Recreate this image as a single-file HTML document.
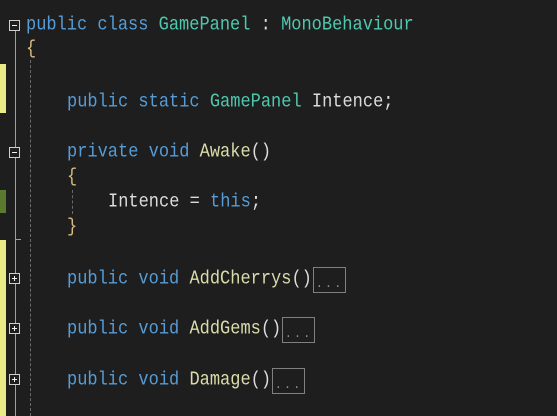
<!DOCTYPE html>
<html><head><style>
html,body{margin:0;padding:0;}
body{width:557px;height:416px;background:#1e1e1e;position:relative;overflow:hidden;font-family:"Liberation Mono",monospace;font-size:17px;}
.l{position:absolute;white-space:pre;line-height:25px;height:25px;color:#dcdcdc;transform:scaleY(1.15);transform-origin:0 50%;}
.k{color:#569cd6}.c{color:#4ec9b0}.m{color:#dcdcaa}.b{color:#d7ba7d}
.bar{position:absolute;left:0;width:6px;}
.fold{position:absolute;left:9px;width:11px;height:11px;border:1px solid #d0d0d0;background:#1e1e1e;box-sizing:border-box;}
.fold:before{content:"";position:absolute;left:2px;top:4px;width:5px;height:1px;background:#f0f0f0;}
.plus:after{content:"";position:absolute;left:4px;top:2px;width:1px;height:5px;background:#f0f0f0;}
.vl{position:absolute;left:15px;width:1px;background:#a0a0a0;}
.dash{position:absolute;width:0;border-left:1px dashed #6a6a6a;}
.box{position:absolute;width:31px;height:24px;border:1px solid #808080;color:#909090;font-size:12px;line-height:32px;text-align:center;letter-spacing:2px;}
</style></head><body>
<div class="bar" style="top:64px;height:49px;background:#eaeb84"></div>
<div class="bar" style="top:190px;height:23px;background:#5b7a2f"></div>
<div class="bar" style="top:240px;height:176px;background:#eaeb84"></div>
<div class="vl" style="top:31px;height:116px"></div>
<div class="vl" style="top:158px;height:82px"></div>
<div style="position:absolute;left:15px;top:239px;width:6px;height:1px;background:#a0a0a0"></div>
<div class="vl" style="top:240px;height:176px"></div>
<div class="fold" style="top:20px"></div>
<div class="fold" style="top:147px"></div>
<div class="fold plus" style="top:273px"></div>
<div class="fold plus" style="top:323px"></div>
<div class="fold plus" style="top:374px"></div>
<div class="dash" style="left:30px;top:60px;height:356px"></div>
<div class="dash" style="left:72px;top:190px;height:24px"></div>

<div class="l" style="left:26px;top:13px"><span class="k">public</span> <span class="k">class</span> <span class="c">GamePanel</span> : <span class="c">MonoBehaviour</span></div>
<div class="l b" style="left:26px;top:37px">{</div>
<div class="l" style="left:67px;top:90px"><span class="k">public</span> <span class="k">static</span> <span class="c">GamePanel</span> Intence;</div>
<div class="l" style="left:67px;top:140px"><span class="k">private</span> <span class="k">void</span> <span class="m">Awake</span>()</div>
<div class="l b" style="left:67px;top:165px">{</div>
<div class="l" style="left:108px;top:190px">Intence = <span class="k">this</span>;</div>
<div class="l b" style="left:67px;top:215px">}</div>
<div class="l" style="left:67px;top:267px"><span class="k">public</span> <span class="k">void</span> <span class="m">AddCherrys</span>()</div>
<div class="l" style="left:67px;top:317px"><span class="k">public</span> <span class="k">void</span> <span class="m">AddGems</span>()</div>
<div class="l" style="left:67px;top:368px"><span class="k">public</span> <span class="k">void</span> <span class="m">Damage</span>()</div>
<div class="box" style="left:313px;top:267px">...</div>
<div class="box" style="left:282px;top:317px">...</div>
<div class="box" style="left:272px;top:368px">...</div>
</body></html>
